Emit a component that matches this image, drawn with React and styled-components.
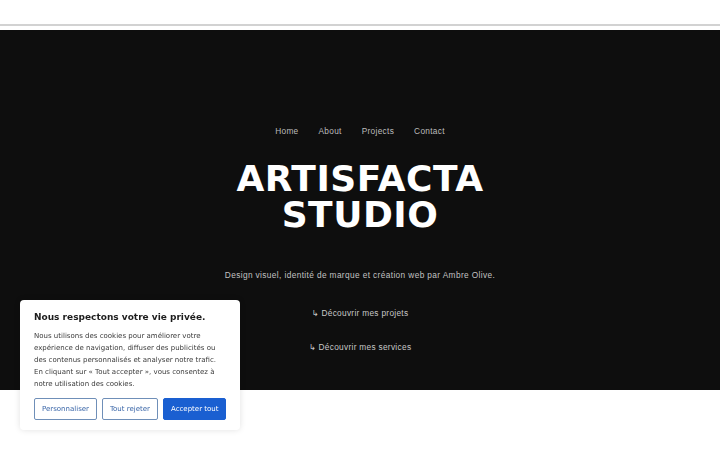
import React from 'react';
import styled, {createGlobalStyle} from 'styled-components';

const Global = createGlobalStyle`
  html, body {
    margin: 0;
    padding: 0;
    background: #fff;
    font-family: "DejaVu Sans", "Liberation Sans", sans-serif;
  }
`;

const Page = styled.div`
  width: 720px;
  height: 450px;
  overflow: hidden;
  display: flex;
  flex-direction: column;
`;

const TopBar = styled.div`
  height: 24px;
  border-bottom: 2px solid #d2d2d2;
  margin-bottom: 4px;
`;

const Hero = styled.section`
  height: 360px;
  background: #0e0e0e;
  display: flex;
  flex-direction: column;
  align-items: center;
  padding-top: 95px;
  box-sizing: border-box;
`;

const Nav = styled.nav`
  display: flex;
  gap: 20px;
`;

const LightText = `
  font-family: "Liberation Sans", "DejaVu Sans", sans-serif;
  font-size: 8.3px;
  letter-spacing: 0.3px;
  line-height: 12px;
  text-decoration: none;
`;

const NavLink = styled.a`
  ${LightText}
  color: #bcbcbc;
`;

const Title = styled.h1`
  margin: 24px 0 0;
  color: #fff;
  font-size: 36px;
  line-height: 36px;
  font-weight: 700;
  text-align: center;
  letter-spacing: 0.5px;
`;

const Subtitle = styled.p`
  ${LightText}
  letter-spacing: 0.38px;
  margin: 36px 0 0;
  color: #c2c2c2;
`;

const Links = styled.div`
  display: flex;
  flex-direction: column;
  align-items: center;
  gap: 21.5px;
  margin-top: 26px;
`;

const CtaLink = styled.a`
  ${LightText}
  color: #c8c8c8;
`;

const Cookie = styled.div`
  position: fixed;
  left: 20px;
  bottom: 20px;
  width: 220px;
  box-sizing: border-box;
  padding: 10px 14px 10px;
  background: #fff;
  border-radius: 4px;
  box-shadow: 0 0 6px rgba(0, 0, 0, 0.12);
`;

const CookieTitle = styled.h2`
  margin: 0;
  font-size: 9px;
  line-height: 14px;
  font-weight: 700;
  color: #1d1d1d;
`;

const CookieText = styled.p`
  margin: 6px 0 0;
  font-size: 7px;
  line-height: 12px;
  color: #3a3a3a;
`;

const Buttons = styled.div`
  display: flex;
  gap: 5px;
  margin-top: 8px;
`;

const Button = styled.button`
  height: 22px;
  padding: 0 7px;
  white-space: nowrap;
  font-family: inherit;
  font-size: 7px;
  border-radius: 2px;
  border: 1.5px solid ${p => (p.primary ? '#1a5fd1' : '#6f8fb8')};
  background: ${p => (p.primary ? '#1a5fd1' : '#fff')};
  color: ${p => (p.primary ? '#fff' : '#3a66a8')};
  cursor: pointer;
`;

export default function App() {
  return (
    <Page>
      <Global />
      <TopBar />
      <Hero>
        <Nav>
          <NavLink href="#">Home</NavLink>
          <NavLink href="#">About</NavLink>
          <NavLink href="#">Projects</NavLink>
          <NavLink href="#">Contact</NavLink>
        </Nav>
        <Title>ARTISFACTA<br />STUDIO</Title>
        <Subtitle>Design visuel, identité de marque et création web par Ambre Olive.</Subtitle>
        <Links>
          <CtaLink href="#">↳ Découvrir mes projets</CtaLink>
          <CtaLink href="#">↳ Découvrir mes services</CtaLink>
        </Links>
      </Hero>
      <Cookie>
        <CookieTitle>Nous respectons votre vie privée.</CookieTitle>
        <CookieText>
          Nous utilisons des cookies pour améliorer votre expérience de navigation, diffuser des publicités ou des contenus personnalisés et analyser notre trafic. En cliquant sur « Tout accepter », vous consentez à notre utilisation des cookies.
        </CookieText>
        <Buttons>
          <Button>Personnaliser</Button>
          <Button>Tout rejeter</Button>
          <Button primary>Accepter tout</Button>
        </Buttons>
      </Cookie>
    </Page>
  );
}
